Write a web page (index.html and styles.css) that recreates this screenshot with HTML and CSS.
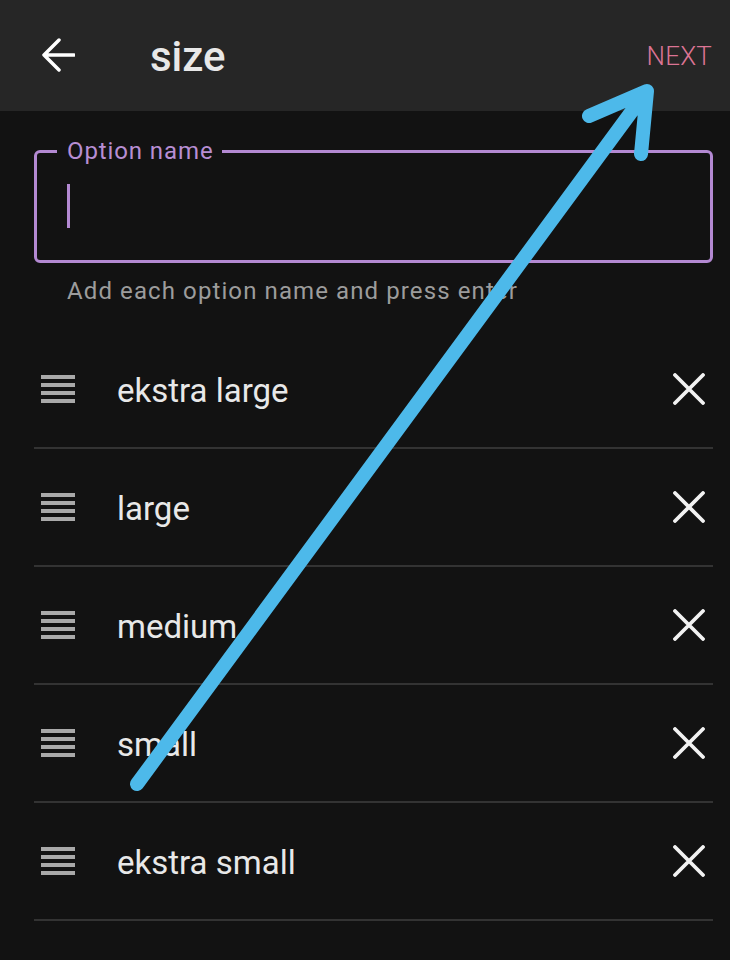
FILE: index.html
```html
<!DOCTYPE html>
<html>
<head>
<meta charset="utf-8">
<link rel="stylesheet" href="styles.css">
</head>
<body>
<div class="page">
  <header class="topbar">
    <svg class="back" width="34" height="34" viewBox="0 0 34 34"><path d="M33 17H3M18 2L3 17l15 15" fill="none" stroke="#fff" stroke-width="3.5" stroke-linecap="round" stroke-linejoin="round"/></svg>
    <h1 class="title">size</h1>
    <span class="next">NEXT</span>
  </header>
  <main class="content">
    <fieldset class="field">
      <legend class="field-label">Option name</legend>
      <div class="cursor"></div>
    </fieldset>
    <p class="helper">Add each option name and press enter</p>
    <ul class="list">
      <li class="row"><span class="handle"><i></i><i></i><i></i><i></i></span><span class="name">ekstra large</span><svg class="remove" width="32" height="32" viewBox="0 0 32 32"><path d="M2 2L30 30M30 2L2 30" stroke="#f2f2f2" stroke-width="3.8" stroke-linecap="round"/></svg></li>
      <li class="row"><span class="handle"><i></i><i></i><i></i><i></i></span><span class="name">large</span><svg class="remove" width="32" height="32" viewBox="0 0 32 32"><path d="M2 2L30 30M30 2L2 30" stroke="#f2f2f2" stroke-width="3.8" stroke-linecap="round"/></svg></li>
      <li class="row"><span class="handle"><i></i><i></i><i></i><i></i></span><span class="name">medium</span><svg class="remove" width="32" height="32" viewBox="0 0 32 32"><path d="M2 2L30 30M30 2L2 30" stroke="#f2f2f2" stroke-width="3.8" stroke-linecap="round"/></svg></li>
      <li class="row"><span class="handle"><i></i><i></i><i></i><i></i></span><span class="name">small</span><svg class="remove" width="32" height="32" viewBox="0 0 32 32"><path d="M2 2L30 30M30 2L2 30" stroke="#f2f2f2" stroke-width="3.8" stroke-linecap="round"/></svg></li>
      <li class="row"><span class="handle"><i></i><i></i><i></i><i></i></span><span class="name">ekstra small</span><svg class="remove" width="32" height="32" viewBox="0 0 32 32"><path d="M2 2L30 30M30 2L2 30" stroke="#f2f2f2" stroke-width="3.8" stroke-linecap="round"/></svg></li>
    </ul>
  </main>
  <svg class="annotation" width="730" height="960" viewBox="0 0 730 960"><path d="M137 784L646 92M589 116L647 91L641 154" fill="none" stroke="#4db9ea" stroke-width="14" stroke-linecap="round" stroke-linejoin="round"/></svg>
</div>
</body>
</html>
```

FILE: styles.css
```css
* { box-sizing: border-box; }
html, body { margin: 0; padding: 0; }
body {
  background: #121212;
  font-family: Roboto, "Noto Sans", sans-serif;
  width: 730px;
  height: 960px;
  overflow: hidden;
}
.page {
  position: relative;
  width: 730px;
  height: 960px;
  background: #121212;
}
.topbar {
  height: 111px;
  background: #262626;
  display: flex;
  align-items: center;
  padding: 0 18px 0 41px;
}
.back { display: block; margin-top: -2px; }
.title {
  margin: 2px 0 0 75px;
  font-size: 42px;
  font-weight: 500;
  color: #e8e8e8;
  flex: 1;
  line-height: 1;
}
.next {
  font-size: 26px;
  font-weight: 300;
  color: #dc7494;
  letter-spacing: 0.2px;
}
.content {
  padding: 0 17px 0 34px;
}
.field {
  margin: 27px 0 0 0;
  border: 3px solid #b389d2;
  border-radius: 6px;
  padding: 0 0 32px 20px;
  min-width: 0;
}
.field-label {
  padding: 0 8px 0 10px;
  font-size: 24px;
  line-height: 26px;
  color: #b78ed3;
  letter-spacing: 0.9px;
}
.cursor {
  width: 3px;
  height: 44px;
  background: #b389d2;
  margin: 20px 0 0 10px;
}
.helper {
  margin: 15px 0 0 33px;
  font-size: 24px;
  line-height: 26px;
  color: #9c9c9c;
  letter-spacing: 1.1px;
}
.list {
  list-style: none;
  margin: 27px 0 0 0;
  padding: 0;
}
.row {
  height: 118px;
  display: flex;
  align-items: center;
  border-bottom: 2px solid #333333;
  padding: 0 8px 0 7px;
}
.handle {
  display: flex;
  flex-direction: column;
  gap: 4px;
  width: 34px;
}
.handle i {
  display: block;
  height: 4px;
  background: #a9a9a9;
}
.name {
  flex: 1;
  margin-left: 42px;
  font-size: 33px;
  color: #e8e8e8;
  padding-top: 3px;
}
.remove { display: block; }
.annotation {
  position: absolute;
  left: 0;
  top: 0;
  pointer-events: none;
}
```
